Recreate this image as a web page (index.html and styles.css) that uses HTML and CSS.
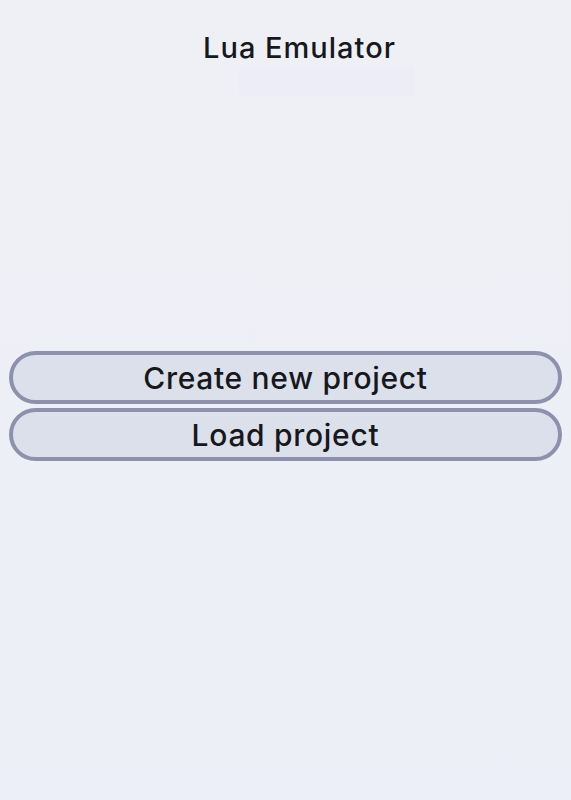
FILE: index.html
```html
<!DOCTYPE html>
<html lang="en">
<head>
<meta charset="utf-8">
<title>Lua Emulator</title>
<link rel="stylesheet" href="styles.css">
</head>
<body>
  <div class="app">
    <header class="header">
      <h1 class="title">Lua Emulator</h1>
      <div class="subtitle"></div>
    </header>
    <main class="menu">
      <button class="menu-btn" type="button">Create new project</button>
      <button class="menu-btn" type="button">Load project</button>
    </main>
  </div>
</body>
</html>
```
FILE: styles.css
```css
html, body {
  margin: 0;
  padding: 0;
}
body {
  background: linear-gradient(#eff0f5, #eceff7);
  font-family: "Inter", "DejaVu Sans", sans-serif;
  color: #16181d;
  min-height: 800px;
}
.app {
  display: flex;
  flex-direction: column;
  padding: 0 9px;
}
.header {
  display: flex;
  flex-direction: column;
  align-items: center;
  padding-top: 31px;
  padding-left: 28px;
}
.title {
  margin: 0;
  font-size: 29px;
  font-weight: 500;
  line-height: 34px;
  letter-spacing: 1px;
}
.subtitle {
  width: 175px;
  height: 29px;
  margin-top: 2px;
  margin-left: 54px;
  background: #ecedf6;
  border-radius: 2px;
}
.menu {
  display: flex;
  flex-direction: column;
  gap: 4px;
  margin-top: 255px;
}
.menu-btn {
  height: 53px;
  border: 4px solid #8e91ad;
  border-radius: 27px;
  background: #dce0ea;
  color: #16181d;
  font-family: inherit;
  font-size: 30px;
  font-weight: 500;
  letter-spacing: 0.7px;
  padding: 0;
  cursor: pointer;
}
```
